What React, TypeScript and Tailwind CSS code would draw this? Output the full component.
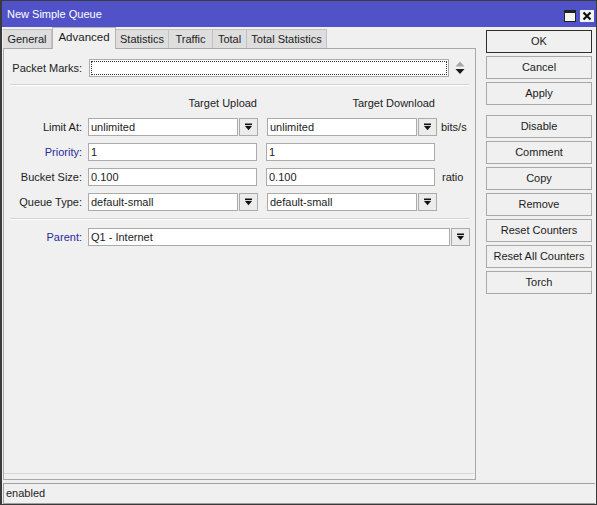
const font = { fontFamily: '"Liberation Sans", Arial, sans-serif' };

const sideButtons = [
  ['OK', 'Cancel', 'Apply'],
  ['Disable', 'Comment', 'Copy', 'Remove', 'Reset Counters', 'Reset All Counters', 'Torch'],
];

const tabs = [
  { name: 'General', w: 'w-[49px]' },
  { name: 'Advanced', w: 'w-[64px]', active: true },
  { name: 'Statistics', w: 'w-[53px]' },
  { name: 'Traffic', w: 'w-[44px]' },
  { name: 'Total', w: 'w-[34px]' },
  { name: 'Total Statistics', w: 'w-[80px]' },
];

function DropIcon() {
  return (
    <svg width="9" height="8" viewBox="0 0 9 8">
      <rect x="1" y="0.5" width="7" height="1.6" fill="#111" />
      <path d="M1 3 H8 L4.5 7.2 Z" fill="#111" />
    </svg>
  );
}

function Field({ value, w }: { value: string; w: string }) {
  return (
    <div className={`${w} h-[18px] bg-white border border-[#ababab] pl-[2px] leading-[16px] text-[11px] text-[#1c1c1c] truncate`}>
      {value}
    </div>
  );
}

function DropButton() {
  return (
    <div className="w-[19px] h-[18px] border border-[#ababab] bg-[#ececec] flex items-center justify-center">
      <DropIcon />
    </div>
  );
}

function Combo({ value, w = 'w-[150px]' }: { value: string; w?: string }) {
  return (
    <div className="flex gap-[1px]">
      <Field value={value} w={w} />
      <DropButton />
    </div>
  );
}

function Label({ text, blue }: { text: string; blue?: boolean }) {
  return (
    <div className={`w-[78px] text-right text-[11px] leading-[18px] ${blue ? 'text-[#2a2a9e]' : 'text-[#1c1c1c]'}`}>
      {text}
    </div>
  );
}

function Separator() {
  return <div className="mx-[6px] border-t border-b border-t-[#d2d2d2] border-b-white" />;
}

export default function App() {
  return (
    <div style={font} className="w-[597px] h-[505px] bg-[#f0f0f0] border-t border-l-2 border-r border-b border-[#3a3a3a] flex flex-col text-[#1c1c1c] select-none">
      {/* title bar */}
      <div className="h-[26px] bg-[#5252c8] flex items-center justify-between pl-[5px] pr-[2px]">
        <span className="text-white text-[11px]">New Simple Queue</span>
        <div className="flex items-center gap-[4px] mt-[3px]">
          <div className="w-[12px] h-[12px] bg-[#f4f4f4] border border-[#222] border-t-[3px]" />
          <div className="w-[14px] h-[12px] bg-[#f4f4f4] flex items-center justify-center">
            <svg width="10" height="10" viewBox="0 0 10 10">
              <path d="M1.5 1.5 L8.5 8.5 M8.5 1.5 L1.5 8.5" stroke="#111" strokeWidth="2.2" />
            </svg>
          </div>
        </div>
      </div>

      <div className="flex">
        {/* left: tabs + panel */}
        <div className="ml-[1px] w-[473px] flex flex-col">
          <div className="h-[21px] flex items-end">
            {tabs.map((t) =>
              t.active ? (
                <div key={t.name} className={`${t.w} h-[22px] -mb-[1px] bg-[#f0f0f0] border-t border-x border-[#b5b5b5] relative z-10 text-center text-[11.5px] leading-[18px]`}>
                  {t.name}
                </div>
              ) : (
                <div key={t.name} className={`${t.w} h-[19px] bg-[#dedede] border-t border-r border-[#c2c2c2] text-center text-[11px] leading-[19px]`}>
                  {t.name}
                </div>
              )
            )}
          </div>
          <div className="h-[432px] border border-[#a8a8a8] bg-[#f0f0f0] flex flex-col">
            {/* packet marks */}
            <div className="flex items-center mt-[10px]">
              <Label text="Packet Marks:" />
              <div className="ml-[7px] w-[360px] h-[18px] bg-white border border-[#ababab] outline-1 outline-dotted outline-[#333] outline-offset-[-3px]" />
              <svg className="ml-[6px]" width="10" height="14" viewBox="0 0 10 14">
                <path d="M5 0.5 L9.5 5.5 H0.5 Z" fill="#a6a6a6" />
                <path d="M0.5 8 H9.5 L5 13 Z" fill="#1a1a1a" />
              </svg>
            </div>
            <div className="mt-[7px]">
              <Separator />
            </div>

            {/* column headers */}
            <div className="flex mt-[10px] text-[11px] leading-[14px]">
              <div className="w-[84px]" />
              <div className="w-[169px] text-right">Target Upload</div>
              <div className="w-[169px] ml-[9px] text-right">Target Download</div>
            </div>

            <div className="flex flex-col gap-[7px] mt-[8px]">
              <div className="flex items-center">
                <Label text="Limit At:" />
                <div className="ml-[6px] flex items-center gap-[9px]">
                  <Combo value="unlimited" />
                  <Combo value="unlimited" />
                </div>
                <span className="ml-[4px] text-[11px]">bits/s</span>
              </div>
              <div className="flex items-center">
                <Label text="Priority:" blue />
                <div className="ml-[6px] flex items-center gap-[9px]">
                  <Field value="1" w="w-[169px]" />
                  <Field value="1" w="w-[169px]" />
                </div>
              </div>
              <div className="flex items-center">
                <Label text="Bucket Size:" />
                <div className="ml-[6px] flex items-center gap-[9px]">
                  <Field value="0.100" w="w-[169px]" />
                  <Field value="0.100" w="w-[169px]" />
                </div>
                <span className="ml-[7px] text-[11px]">ratio</span>
              </div>
              <div className="flex items-center">
                <Label text="Queue Type:" />
                <div className="ml-[6px] flex items-center gap-[9px]">
                  <Combo value="default-small" />
                  <Combo value="default-small" />
                </div>
              </div>
            </div>

            <div className="mt-[7px]">
              <Separator />
            </div>

            <div className="flex items-center mt-[8px]">
              <Label text="Parent:" blue />
              <div className="ml-[6px]">
                <Combo value="Q1 - Internet" w="w-[362px]" />
              </div>
            </div>

            <div className="mt-auto mb-[5px] mr-[1px] border-b border-[#d6d6d6]" />
          </div>
        </div>

        {/* right: buttons */}
        <div className="ml-[10px] w-[106px] pt-[3px] flex flex-col gap-[10px]">
          {sideButtons.map((group, gi) => (
            <div key={gi} className="flex flex-col gap-[3px]">
              {group.map((b) => (
                <div
                  key={b}
                  className={`h-[23px] bg-[#f0f0f0] border ${b === 'OK' ? 'border-[#2e2e2e]' : 'border-[#a9a9a9]'} flex items-center justify-center text-[11px]`}
                >
                  {b}
                </div>
              ))}
            </div>
          ))}
        </div>
      </div>

      {/* status bar */}
      <div className="mt-[3px] ml-[1px] mr-[1px] h-[21px] border-t border-l border-b border-[#a0a0a0] pl-[2px] text-[11px] leading-[19px]">
        enabled
      </div>
    </div>
  );
}
